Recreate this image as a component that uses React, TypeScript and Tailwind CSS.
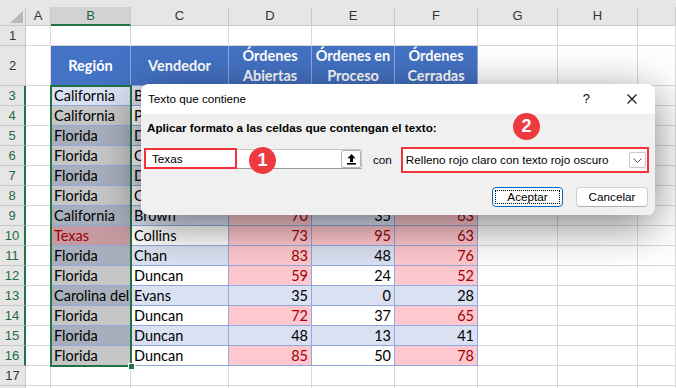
import React from "react";

const W = ["w-[26px]", "w-[25px]", "w-[80px]", "w-[98px]", "w-[83px]", "w-[83px]", "w-[83px]", "w-[80px]", "w-[80px]", "flex-1"];
const LETTERS = ["A", "B", "C", "D", "E", "F", "G", "H", ""];

// filas 3-16: región, vendedor, abiertas, en proceso, cerradas
const data: [string, string, number, number, number][] = [
  ["California", "Brown", 45, 20, 38],
  ["California", "Perez", 60, 55, 30],
  ["Florida", "Duncan", 40, 12, 57],
  ["Florida", "Chan", 66, 31, 44],
  ["Florida", "Duncan", 28, 9, 70],
  ["Florida", "Collins", 51, 40, 22],
  ["California", "Brown", 70, 35, 63],
  ["Texas", "Collins", 73, 95, 63],
  ["Florida", "Chan", 83, 48, 76],
  ["Florida", "Duncan", 59, 24, 52],
  ["Carolina del Norte", "Evans", 35, 0, 28],
  ["Florida", "Duncan", 72, 37, 65],
  ["Florida", "Duncan", 48, 13, 41],
  ["Florida", "Duncan", 85, 50, 78],
];

const grid = "border-r border-b border-[#d9d9d9]";
const tbl = "border-r border-b border-[#8ea9db]";

function bgFor(sel: boolean, red: boolean, odd: boolean) {
  if (red) return sel ? "bg-[#c69aa0]" : "bg-[#ffc7ce]";
  if (odd) return sel ? "bg-[#a8afbc]" : "bg-[#d9e1f2]";
  return sel ? "bg-[#c6c6c6]" : "bg-white";
}

function RowHead({ n, sel }: { n?: number; sel?: boolean }) {
  return (
    <div
      className={`${W[0]} shrink-0 flex items-center justify-center bg-[#e6e6e6] border-b border-[#c8c8c8] text-[13px] font-['Liberation_Sans',sans-serif] ${
        sel ? "border-r-2 border-r-[#217346] text-[#1e6b41] bg-[#dedede]" : "border-r text-[#333]"
      }`}
    >
      {n}
    </div>
  );
}

function Cell({ i, cls, children, right }: { i: number; cls: string; children?: React.ReactNode; right?: boolean }) {
  return (
    <div
      className={`${W[i]} shrink-0 h-full flex items-center overflow-hidden whitespace-nowrap px-[3px] ${
        right ? "justify-end" : ""
      } ${cls}`}
    >
      {children}
    </div>
  );
}

function EmptyRow({ n }: { n?: number }) {
  return (
    <div className="flex h-[20px]">
      <RowHead n={n} />
      {W.slice(1).map((w, i) => (
        <Cell key={i} i={i + 1} cls={grid} />
      ))}
    </div>
  );
}

function DataRow({ r, d }: { r: number; d: [string, string, number, number, number] }) {
  const [reg, ven, dv, ev, fv] = d;
  const odd = r % 2 === 1;
  const selB = r !== 3;
  const regRed = reg === "Texas";
  const txt = (red: boolean) => (red ? "text-[#9c0006]" : "text-black");
  return (
    <div className="flex h-[20px] text-[14.5px]">
      <RowHead n={r} sel />
      <Cell i={1} cls={grid} />
      <Cell i={2} cls={`${tbl} ${bgFor(selB, regRed, odd)} ${txt(regRed)}`}>{reg}</Cell>
      <Cell i={3} cls={`${tbl} ${bgFor(false, false, odd)} text-black`}>{ven}</Cell>
      {[dv, ev, fv].map((v, k) => (
        <Cell key={k} i={4 + k} right cls={`${tbl} ${bgFor(false, v > 50, odd)} ${txt(v > 50)}`}>
          {v}
        </Cell>
      ))}
      <Cell i={7} cls={grid} />
      <Cell i={8} cls={grid} />
      <Cell i={9} cls={grid} />
    </div>
  );
}

function Badge({ n, cls }: { n: number; cls: string }) {
  return (
    <div
      className={`absolute ${cls} w-[27px] h-[27px] rounded-full bg-[#ee3a3f] text-white flex items-center justify-center font-bold text-[18px] font-['Liberation_Sans',sans-serif]`}
    >
      {n}
    </div>
  );
}

function Dialog() {
  return (
    <div className="absolute left-[141px] top-[84px] w-[514px] h-[131px] rounded-[8px] overflow-hidden flex flex-col shadow-[0_10px_44px_rgba(0,0,0,0.5)] font-['Liberation_Sans',sans-serif] text-[11.7px] text-black">
      <div className="h-[30px] shrink-0 bg-white flex items-center pl-[7px]">
        <span>Texto que contiene</span>
        <span className="ml-auto mr-[37px] text-[13px]">?</span>
        <svg width="10" height="10" viewBox="0 0 10 10" className="mr-[18px]">
          <path d="M0.5 0.5L9.5 9.5M9.5 0.5L0.5 9.5" stroke="#111" strokeWidth="1.1" />
        </svg>
      </div>
      <div className="flex-1 bg-[#f0f0f0]">
        <div className="pl-[6px] pt-[6px] font-bold leading-[16px]">
          Aplicar formato a las celdas que contengan el texto:
        </div>
        <div className="mt-[11px] flex items-start h-[26px]">
          <div className="relative ml-[4px] mt-[2px] w-[217px] h-[20px] flex bg-white border border-[#c6c6c6] border-b-[#9a9a9a]">
            <span className="flex-1 pl-[6px] leading-[18px]">Texas</span>
            <div className="w-[20px] bg-white border border-[#b4b4b4] rounded-[2px] flex items-center justify-center">
              <svg width="11" height="12" viewBox="0 0 11 12">
                <path d="M5.5 1L1.5 5.2H4V9H7V5.2H9.5Z" fill="#000" />
                <rect x="1" y="10" width="9" height="1.6" fill="#000" />
              </svg>
            </div>
            <div className="absolute -left-[2px] -top-[2px] w-[93px] h-[21px] border-2 border-[#f2333a]" />
          </div>
          <span className="ml-[11px] h-[26px] flex items-center">con</span>
          <div className="ml-[9px] w-[248px] h-[26px] border-2 border-[#f2333a] bg-white flex items-center pl-[3px]">
            <span>Relleno rojo claro con texto rojo oscuro</span>
            <div className="ml-auto mr-[1px] w-[17px] h-[16px] border border-[#c8c8c8] rounded-[2px] flex items-center justify-center">
              <svg width="9" height="5" viewBox="0 0 9 5">
                <path d="M0.5 0.5L4.5 4.5L8.5 0.5" stroke="#555" fill="none" strokeWidth="1" />
              </svg>
            </div>
          </div>
        </div>
        <div className="mt-[14px] flex justify-end gap-[13px] pr-[7px]">
          <div className="relative w-[71px] h-[20px] bg-white border border-[#0067c0] rounded-[4px] flex items-center justify-center">
            <div className="absolute inset-[2px] border border-dotted border-black" />
            Aceptar
          </div>
          <div className="w-[72px] h-[20px] bg-white border border-[#d0d0d0] border-b-[#b0b0b0] rounded-[4px] flex items-center justify-center">
            Cancelar
          </div>
        </div>
      </div>
      <Badge n={1} cls="left-[108px] top-[63px]" />
      <Badge n={2} cls="left-[372px] top-[29px]" />
    </div>
  );
}

export default function App() {
  return (
    <div className="relative w-[676px] h-[388px] overflow-hidden bg-white font-['Lato',sans-serif] text-black">
      {/* encabezado de columnas */}
      <div className="bg-[#e6e6e6] h-[26px] flex flex-col">
        <div className="h-[7px]" />
        <div className="flex h-[19px] text-[13px] font-['Liberation_Sans',sans-serif] text-[#333]">
          <div className={`${W[0]} shrink-0 relative border-r border-b border-[#c8c8c8]`}>
            <svg width="13" height="12" viewBox="0 0 13 12" className="absolute left-[10px] top-[4px]">
              <path d="M13 0V12H0Z" fill="#b7b7b7" />
            </svg>
          </div>
          {LETTERS.map((l, i) => (
            <div
              key={i}
              className={`${W[i + 1]} shrink-0 flex items-center justify-center border-r ${
                l === "B"
                  ? "bg-[#d2d2d2] border-b-2 border-[#c8c8c8] border-b-[#217346] text-[#1e6b41]"
                  : "border-b border-[#c8c8c8]"
              }`}
            >
              {l}
            </div>
          ))}
        </div>
      </div>

      <EmptyRow n={1} />

      {/* fila de títulos */}
      <div className="flex h-[40px] text-[14.5px]">
        <RowHead n={2} />
        <Cell i={1} cls={grid} />
        {["Región", "Vendedor", "Órdenes|Abiertas", "Órdenes en|Proceso", "Órdenes|Cerradas"].map((t, k) => (
          <div
            key={k}
            className={`${W[2 + k]} shrink-0 flex flex-col items-center justify-center bg-[#4472c4] border-r border-b border-[#8ea9db] text-white font-bold leading-[20px]`}
          >
            {t.split("|").map((s) => (
              <span key={s}>{s}</span>
            ))}
          </div>
        ))}
        <Cell i={7} cls={grid} />
        <Cell i={8} cls={grid} />
        <Cell i={9} cls={grid} />
      </div>

      {data.map((d, k) => (
        <DataRow key={k} r={k + 3} d={d} />
      ))}
      <EmptyRow n={17} />
      <EmptyRow />

      {/* selección B3:B16 */}
      <div className="absolute left-[50px] top-[85px] w-[82px] h-[282px] border-2 border-[#217346]" />
      <div className="absolute left-[128px] top-[363px] w-[7px] h-[7px] bg-[#217346] border border-white" />

      <Dialog />
    </div>
  );
}
